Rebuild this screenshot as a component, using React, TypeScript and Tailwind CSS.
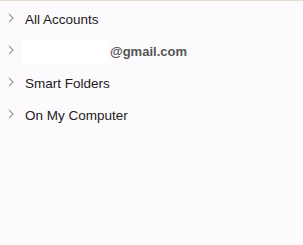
import React from "react"

function Chevron() {
  return (
    <svg width="6" height="10" viewBox="0 0 6 10" className="shrink-0 text-[#9a989c]" fill="none" stroke="currentColor" strokeWidth={1.1}>
      <path d="M1 1l4 4-4 4" />
    </svg>
  )
}

function Row({ children }: { children: React.ReactNode }) {
  return (
    <div className="h-8 flex items-center">
      <div className="w-[25px] pl-[8px] flex items-center -mt-[5px]">
        <Chevron />
      </div>
      {children}
    </div>
  )
}

export default function App() {
  return (
    <div
      className="w-[303px] h-[245px] bg-[#fdfafd] border-t border-[#e2ddd0] text-[13.5px] text-[#1c1c1c] overflow-hidden"
      style={{ fontFamily: '"Liberation Sans", Arial, sans-serif' }}
    >
      <div className="pt-[3px]">
        <Row>
          <span>All Accounts</span>
        </Row>
        <Row>
          <div className="flex items-center">
            <div className="w-[86px] h-[22px] bg-white -ml-[3px]" />
            <span className="font-bold text-[13px] text-[#555555] ml-[2px]">@gmail.com</span>
          </div>
        </Row>
        <Row>
          <span>Smart Folders</span>
        </Row>
        <Row>
          <span>On My Computer</span>
        </Row>
      </div>
    </div>
  )
}
